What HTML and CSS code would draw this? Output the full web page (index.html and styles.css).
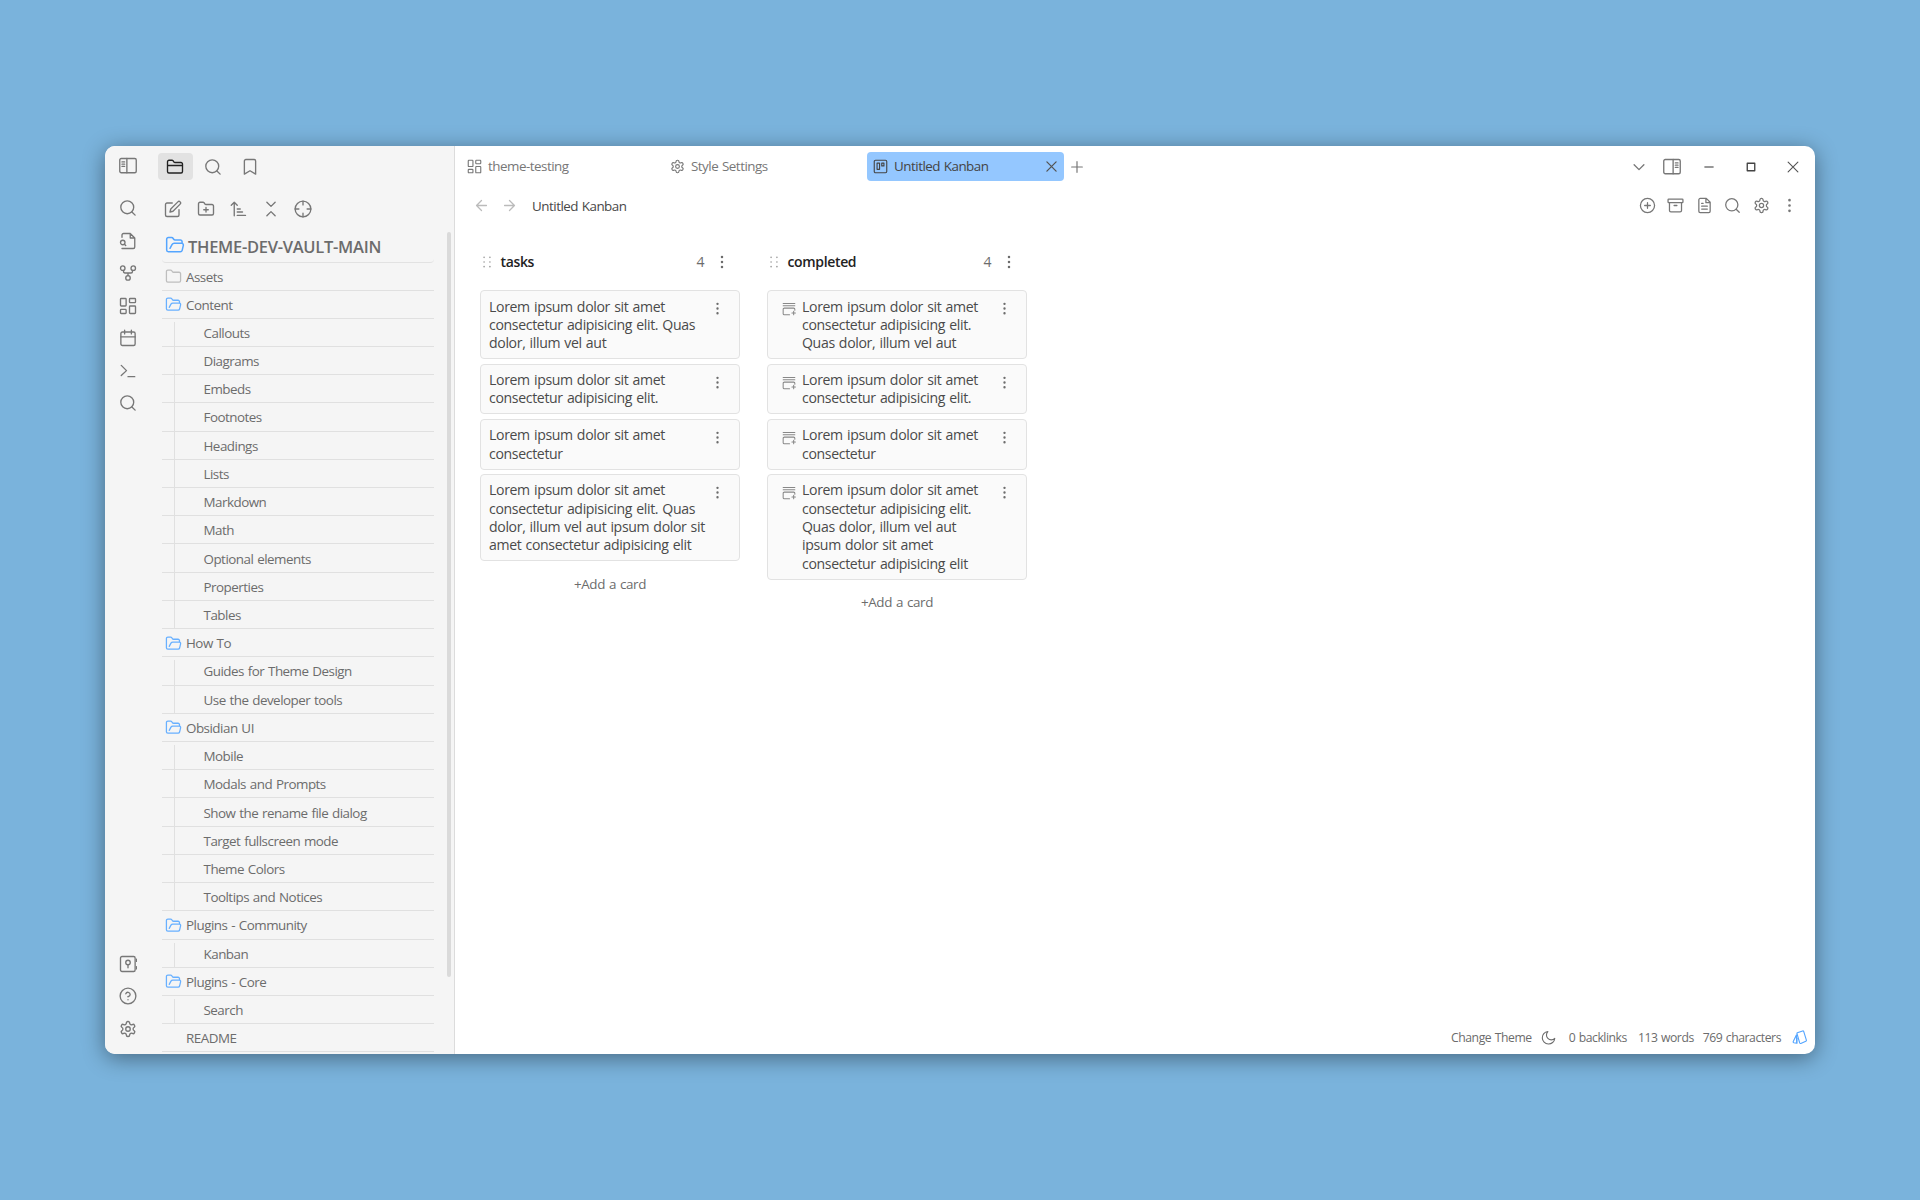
FILE: index.html
```html
<!DOCTYPE html>
<html lang="en">
<head>
<meta charset="utf-8">
<title>Untitled Kanban</title>
<link rel="stylesheet" href="styles.css">
</head>
<body>
<svg class="sprite" aria-hidden="true">
  <symbol id="search" viewBox="0 0 24 24"><circle cx="11" cy="11" r="8.6"/><path d="m21.5 21.5-4.3-4.3"/></symbol>
  <symbol id="panel-left" viewBox="0 0 24 24"><rect x="1" y="2" width="22" height="19" rx="2"/><path d="M10.5 2v19M4 6.500h3.5M4 9.500h3.5M4 12.500h3.5"/></symbol>
  <symbol id="panel-right" viewBox="0 0 24 24"><rect x="1" y="2" width="22" height="19" rx="2"/><path d="M13.5 2v19M16.5 6.500H20M16.5 9.500H20M16.5 12.500H20"/></symbol>
  <symbol id="folder-tab" viewBox="0 0 24 24"><path d="M4 20h16a2 2 0 0 0 2-2V8a2 2 0 0 0-2-2h-7.900a2 2 0 0 1-1.700-.9L9.600 3.900A2 2 0 0 0 7.900 3H4a2 2 0 0 0-2 2v13c0 1.100.9 2 2 2ZM2 10h20"/></symbol>
  <symbol id="bookmark" viewBox="0 0 24 24"><path d="m19.500 21.500-7.500-4.500-7.500 4.500V4a2 2 0 0 1 2-2h11a2 2 0 0 1 2 2z"/></symbol>
  <symbol id="edit" viewBox="0 0 24 24"><path d="M11 4H4a2 2 0 0 0-2 2v14a2 2 0 0 0 2 2h14a2 2 0 0 0 2-2v-7"/><path d="M18.500 2.500a2.120 2.120 0 0 1 3 3L12 15l-4 1 1-4z"/></symbol>
  <symbol id="folder-plus" viewBox="0 0 24 24"><path d="M4 20h16a2 2 0 0 0 2-2V8a2 2 0 0 0-2-2h-7.900a2 2 0 0 1-1.700-.9L9.600 3.900A2 2 0 0 0 7.900 3H4a2 2 0 0 0-2 2v13c0 1.100.9 2 2 2ZM12 10v6M9 13h6"/></symbol>
  <symbol id="sort" viewBox="0 0 24 24"><path d="m3 7 4-4 4 4M7 3v18M11 12h4M11 16h7M11 20.500h11"/></symbol>
  <symbol id="collapse" viewBox="0 0 24 24"><path d="m6.500 21 5.500-5.500 5.500 5.500M6.500 3l5.500 5.500L17.500 3"/></symbol>
  <symbol id="crosshair" viewBox="0 0 24 24"><circle cx="12" cy="12" r="10.500"/><path d="M22.500 12h-5M6.500 12h-5M12 6.500v-5M12 22.500v-5"/></symbol>
  <symbol id="file-search" viewBox="0 0 24 24"><path d="M4 7V4a2 2 0 0 1 2-2h9l6 6v12a2 2 0 0 1-2 2H4M15 2v6h6"/><circle cx="5" cy="14" r="3"/><path d="m9 18-1.800-1.800"/></symbol>
  <symbol id="fork" viewBox="0 0 24 24"><circle cx="12" cy="18.500" r="3"/><circle cx="5" cy="5.500" r="3"/><circle cx="19" cy="5.500" r="3"/><path d="M18 8.500v1.500q0 2-2 2H8q-2 0-2-2V8.500M12 12v3.500"/></symbol>
  <symbol id="dashboard" viewBox="0 0 24 24"><rect x="2" y="2" width="7.500" height="10" rx="1"/><rect x="14" y="2" width="8" height="5.500" rx="1"/><rect x="14" y="12" width="8" height="10" rx="1"/><rect x="2" y="16.500" width="7.500" height="5.500" rx="1"/></symbol>
  <symbol id="calendar" viewBox="0 0 24 24"><rect x="2.500" y="4" width="19" height="18" rx="2"/><path d="M16.500 1.500v5M7.500 1.500v5M2.500 10.500h19"/></symbol>
  <symbol id="terminal" viewBox="0 0 24 24"><path d="m3 18 7-6.500L3 4.500M12 19.500h9"/></symbol>
  <symbol id="vault" viewBox="0 0 24 24"><rect x="2" y="2" width="19.500" height="20" rx="2"/><circle cx="12" cy="10" r="3"/><path d="M12 13v4M23.500 5.500v3M23.500 15.500v3"/></symbol>
  <symbol id="help" viewBox="0 0 24 24"><circle cx="12" cy="12" r="10.500"/><path d="M9.100 9a3 3 0 0 1 5.800 1c0 2-3 3-3 3M12 17h.01"/></symbol>
  <symbol id="settings" viewBox="0 0 24 24"><path d="M12.220 2h-.44a2 2 0 0 0-2 2v.18a2 2 0 0 1-1 1.730l-.43.25a2 2 0 0 1-2 0l-.15-.08a2 2 0 0 0-2.730.73l-.22.38a2 2 0 0 0 .73 2.730l.15.1a2 2 0 0 1 1 1.720v.51a2 2 0 0 1-1 1.740l-.15.09a2 2 0 0 0-.73 2.730l.22.38a2 2 0 0 0 2.730.73l.15-.08a2 2 0 0 1 2 0l.43.25a2 2 0 0 1 1 1.730V20a2 2 0 0 0 2 2h.44a2 2 0 0 0 2-2v-.18a2 2 0 0 1 1-1.730l.43-.25a2 2 0 0 1 2 0l.15.08a2 2 0 0 0 2.730-.73l.22-.39a2 2 0 0 0-.73-2.730l-.15-.08a2 2 0 0 1-1-1.740v-.5a2 2 0 0 1 1-1.740l.15-.09a2 2 0 0 0 .73-2.730l-.22-.38a2 2 0 0 0-2.730-.73l-.15.08a2 2 0 0 1-2 0l-.43-.25a2 2 0 0 1-1-1.730V4a2 2 0 0 0-2-2z"/><circle cx="12" cy="12" r="3"/></symbol>
  <symbol id="folder" viewBox="0 0 24 24"><path d="M4 20h16a2 2 0 0 0 2-2V8a2 2 0 0 0-2-2h-7.900a2 2 0 0 1-1.700-.9L9.600 3.900A2 2 0 0 0 7.900 3H4a2 2 0 0 0-2 2v13c0 1.100.9 2 2 2Z"/></symbol>
  <symbol id="folder-open" viewBox="0 0 24 24"><path d="M20.500 9V8a2 2 0 0 0-2-2h-6.400a2 2 0 0 1-1.700-.9L9.600 3.900A2 2 0 0 0 7.900 3H4a2 2 0 0 0-2 2v13c0 1.100.9 2 2 2h14.500a2.200 2.200 0 0 0 2.100-1.600L22 12.500a2 2 0 0 0-1.700-2.500H11a3 3 0 0 0-2.600 1.500L6 16"/></symbol>
  <symbol id="kanban" viewBox="0 0 24 24"><rect x="2" y="2" width="20" height="20" rx="2"/><rect x="6.500" y="6.500" width="4" height="10"/><rect x="14" y="6.500" width="3.500" height="4.500"/></symbol>
  <symbol id="x" viewBox="0 0 24 24"><path d="M18.500 5.500l-13 13M5.500 5.500l13 13"/></symbol>
  <symbol id="plus" viewBox="0 0 24 24"><path d="M12 4v16M4 12h16"/></symbol>
  <symbol id="left" viewBox="0 0 24 24"><path d="m12 19-7-7 7-7M19 12H5"/></symbol>
  <symbol id="right" viewBox="0 0 24 24"><path d="m12 5 7 7-7 7M5 12h14"/></symbol>
  <symbol id="chevron" viewBox="0 0 24 24"><path d="m5.500 9 6.500 6.500L18.500 9"/></symbol>
  <symbol id="minus" viewBox="0 0 24 24"><path d="M6.500 12h11"/></symbol>
  <symbol id="square" viewBox="0 0 24 24"><path d="M7 7h10v10H7z"/></symbol>
  <symbol id="plus-circle" viewBox="0 0 24 24"><circle cx="12" cy="12" r="10"/><path d="M12 8v8M8 12h8"/></symbol>
  <symbol id="archive" viewBox="0 0 24 24"><rect x="1.500" y="3" width="21" height="5" rx="1"/><path d="M3.500 8v11a2 2 0 0 0 2 2h13a2 2 0 0 0 2-2V8M10 12h4"/></symbol>
  <symbol id="file" viewBox="0 0 24 24"><path d="M14.500 2H6a2 2 0 0 0-2 2v16a2 2 0 0 0 2 2h12a2 2 0 0 0 2-2V7.500zM14 2v6h6M16 13H8M16 17H8M10 9H8"/></symbol>
  <symbol id="more" viewBox="0 0 24 24"><circle cx="12" cy="12" r="1"/><circle cx="12" cy="4.500" r="1"/><circle cx="12" cy="19.500" r="1"/></symbol>
  <symbol id="grip" viewBox="0 0 24 24"><path d="M7 4h.01M7 12h.01M7 20h.01M17 4h.01M17 12h.01M17 20h.01"/></symbol>
  <symbol id="note-plus" viewBox="0 0 24 24"><path d="M2 2.500h20M2 6.500h20M22 14v-1.500a2 2 0 0 0-2-2H4a2 2 0 0 0-2 2V20a2 2 0 0 0 2 2h9M20 16v6M17 19h6"/></symbol>
  <symbol id="moon" viewBox="0 0 24 24"><path d="M11 2.500a7.500 7.500 0 0 0 11 11A10 10 0 1 1 11 2.500z"/></symbol>
  <symbol id="cards" viewBox="0 0 24 24"><path d="m8.500 4.500 8.500-3q1.200-.3 1.700.8l4.300 14q.3 1.300-.9 1.700l-8 3.500q-1.300.4-1.800-.9L8 6q-.3-1 .5-1.500zM7 8 2 18.500q-.5 1.500 1 2l4.500.5zM8 13v8"/></symbol>
</svg>

<div class="window">
  <aside class="sidebar">
    <nav class="ribbon">
      <svg class="icon toggle"><use href="#panel-left"/></svg>
      <div class="ribbon-actions">
        <svg class="icon"><use href="#search"/></svg>
        <svg class="icon"><use href="#file-search"/></svg>
        <svg class="icon"><use href="#fork"/></svg>
        <svg class="icon"><use href="#dashboard"/></svg>
        <svg class="icon"><use href="#calendar"/></svg>
        <svg class="icon"><use href="#terminal"/></svg>
        <svg class="icon"><use href="#search"/></svg>
      </div>
      <div class="ribbon-actions ribbon-bottom">
        <svg class="icon"><use href="#vault"/></svg>
        <svg class="icon"><use href="#help"/></svg>
        <svg class="icon"><use href="#settings"/></svg>
      </div>
    </nav>
    <div class="explorer">
      <div class="side-tabs">
        <span class="side-tab active"><svg class="icon"><use href="#folder-tab"/></svg></span>
        <span class="side-tab"><svg class="icon"><use href="#search"/></svg></span>
        <span class="side-tab"><svg class="icon"><use href="#bookmark"/></svg></span>
      </div>
      <div class="side-tools">
        <svg class="icon"><use href="#edit"/></svg>
        <svg class="icon"><use href="#folder-plus"/></svg>
        <svg class="icon"><use href="#sort"/></svg>
        <svg class="icon"><use href="#collapse"/></svg>
        <svg class="icon"><use href="#crosshair"/></svg>
      </div>
      <div class="tree-scroll">
        <div class="tree">
          <div class="vault"><svg class="icon"><use href="#folder-open"/></svg><span>THEME-DEV-VAULT-MAIN</span></div>
          <div class="row folder closed"><svg class="icon"><use href="#folder"/></svg><span>Assets</span></div>
          <div class="row folder"><svg class="icon"><use href="#folder-open"/></svg><span>Content</span></div>
          <div class="children">
            <div class="row"><span>Callouts</span></div>
            <div class="row"><span>Diagrams</span></div>
            <div class="row"><span>Embeds</span></div>
            <div class="row"><span>Footnotes</span></div>
            <div class="row"><span>Headings</span></div>
            <div class="row"><span>Lists</span></div>
            <div class="row"><span>Markdown</span></div>
            <div class="row"><span>Math</span></div>
            <div class="row"><span>Optional elements</span></div>
            <div class="row"><span>Properties</span></div>
            <div class="row"><span>Tables</span></div>
          </div>
          <div class="row folder"><svg class="icon"><use href="#folder-open"/></svg><span>How To</span></div>
          <div class="children">
            <div class="row"><span>Guides for Theme Design</span></div>
            <div class="row"><span>Use the developer tools</span></div>
          </div>
          <div class="row folder"><svg class="icon"><use href="#folder-open"/></svg><span>Obsidian UI</span></div>
          <div class="children">
            <div class="row"><span>Mobile</span></div>
            <div class="row"><span>Modals and Prompts</span></div>
            <div class="row"><span>Show the rename file dialog</span></div>
            <div class="row"><span>Target fullscreen mode</span></div>
            <div class="row"><span>Theme Colors</span></div>
            <div class="row"><span>Tooltips and Notices</span></div>
          </div>
          <div class="row folder"><svg class="icon"><use href="#folder-open"/></svg><span>Plugins - Community</span></div>
          <div class="children">
            <div class="row"><span>Kanban</span></div>
          </div>
          <div class="row folder"><svg class="icon"><use href="#folder-open"/></svg><span>Plugins - Core</span></div>
          <div class="children">
            <div class="row"><span>Search</span></div>
          </div>
          <div class="row root-file"><span>README</span></div>
        </div>
        <div class="scroll-track"><div class="scroll-thumb"></div></div>
      </div>
    </div>
  </aside>

  <main class="main">
    <div class="tabs">
      <div class="tab"><svg class="icon"><use href="#dashboard"/></svg><span>theme-testing</span></div>
      <div class="tab"><svg class="icon"><use href="#settings"/></svg><span>Style Settings</span></div>
      <div class="tab active"><svg class="icon"><use href="#kanban"/></svg><span>Untitled Kanban</span><svg class="icon close"><use href="#x"/></svg></div>
      <svg class="icon new-tab"><use href="#plus"/></svg>
      <div class="window-controls">
        <svg class="icon chevron"><use href="#chevron"/></svg>
        <svg class="icon panel"><use href="#panel-right"/></svg>
        <svg class="icon minimize"><use href="#minus"/></svg>
        <svg class="icon maximize"><use href="#square"/></svg>
        <svg class="icon quit"><use href="#x"/></svg>
      </div>
    </div>
    <header class="view-header">
      <div class="history">
        <svg class="icon"><use href="#left"/></svg>
        <svg class="icon"><use href="#right"/></svg>
      </div>
      <span class="view-title">Untitled Kanban</span>
      <div class="view-actions">
        <svg class="icon"><use href="#plus-circle"/></svg>
        <svg class="icon"><use href="#archive"/></svg>
        <svg class="icon"><use href="#file"/></svg>
        <svg class="icon"><use href="#search"/></svg>
        <svg class="icon"><use href="#settings"/></svg>
        <svg class="icon more"><use href="#more"/></svg>
      </div>
    </header>
    <div class="board">
      <section class="lane">
        <div class="lane-header"><svg class="icon grip"><use href="#grip"/></svg><h2>tasks</h2><span class="count">4</span><svg class="icon more"><use href="#more"/></svg></div>
        <div class="cards">
          <article class="card"><p>Lorem ipsum dolor sit amet<br>consectetur adipisicing elit. Quas<br>dolor, illum vel aut</p><svg class="icon more"><use href="#more"/></svg></article>
          <article class="card"><p>Lorem ipsum dolor sit amet<br>consectetur adipisicing elit.</p><svg class="icon more"><use href="#more"/></svg></article>
          <article class="card"><p>Lorem ipsum dolor sit amet<br>consectetur</p><svg class="icon more"><use href="#more"/></svg></article>
          <article class="card"><p>Lorem ipsum dolor sit amet<br>consectetur adipisicing elit. Quas<br>dolor, illum vel aut ipsum dolor sit<br>amet consectetur adipisicing elit</p><svg class="icon more"><use href="#more"/></svg></article>
        </div>
        <div class="add-card">+Add a card</div>
      </section>
      <section class="lane">
        <div class="lane-header"><svg class="icon grip"><use href="#grip"/></svg><h2>completed</h2><span class="count">4</span><svg class="icon more"><use href="#more"/></svg></div>
        <div class="cards">
          <article class="card"><svg class="icon note"><use href="#note-plus"/></svg><p>Lorem ipsum dolor sit amet<br>consectetur adipisicing elit.<br>Quas dolor, illum vel aut</p><svg class="icon more"><use href="#more"/></svg></article>
          <article class="card"><svg class="icon note"><use href="#note-plus"/></svg><p>Lorem ipsum dolor sit amet<br>consectetur adipisicing elit.</p><svg class="icon more"><use href="#more"/></svg></article>
          <article class="card"><svg class="icon note"><use href="#note-plus"/></svg><p>Lorem ipsum dolor sit amet<br>consectetur</p><svg class="icon more"><use href="#more"/></svg></article>
          <article class="card"><svg class="icon note"><use href="#note-plus"/></svg><p>Lorem ipsum dolor sit amet<br>consectetur adipisicing elit.<br>Quas dolor, illum vel aut<br>ipsum dolor sit amet<br>consectetur adipisicing elit</p><svg class="icon more"><use href="#more"/></svg></article>
        </div>
        <div class="add-card">+Add a card</div>
      </section>
    </div>
    <footer class="status">
      <span class="theme">Change Theme</span>
      <svg class="icon moon"><use href="#moon"/></svg>
      <span class="backlinks">0 backlinks</span>
      <span class="words">113 words</span>
      <span class="chars">769 characters</span>
      <svg class="icon deck"><use href="#cards"/></svg>
    </footer>
  </main>
</div>
</body>
</html>
```
FILE: styles.css
```css
* { box-sizing: border-box; }
body {
  margin: 0;
  height: 1200px;
  padding: 146px 105px;
  overflow: hidden;
  background: #7ab3dc;
  font-family: "Open Sans", "Noto Sans", sans-serif;
  font-size: 13.4px;
  letter-spacing: -0.5px;
  word-spacing: 0.8px;
  color: #6c6c6c;
  white-space: nowrap;
}
.sprite { position: absolute; width: 0; height: 0; }
.icon {
  width: 18px;
  height: 18px;
  flex: none;
  overflow: visible;
  fill: none;
  stroke: currentColor;
  stroke-width: 1.8;
  stroke-linecap: round;
  stroke-linejoin: round;
}
.window {
  display: flex;
  width: 1710px;
  height: 908px;
  border-radius: 10px;
  overflow: hidden;
  background: #fff;
  box-shadow: 0 4px 22px rgba(0, 0, 0, .42);
}

/* Sidebar */
.sidebar {
  display: flex;
  width: 350px;
  flex: none;
  background: #f5f5f5;
  border-right: 1px solid #dcdcdc;
}
.ribbon {
  display: flex;
  flex-direction: column;
  align-items: center;
  width: 45px;
  padding: 11px 0 16.500px;
  color: #777;
}
.ribbon-actions { display: flex; flex-direction: column; gap: 14.500px; margin-top: 24px; }
.ribbon-bottom { margin-top: auto; }
.explorer { display: flex; flex-direction: column; flex: 1; padding-left: 8px; }
.side-tabs { display: flex; gap: 3px; height: 41px; padding-top: 7px; color: #777; }
.side-tab { display: flex; align-items: center; justify-content: center; width: 34.500px; height: 27px; border-radius: 4px; }
.side-tab.active { background: #e2e2e2; color: #222; }
.side-tools { display: flex; gap: 14.500px; height: 45px; padding: 12.500px 6px 0; color: #777; }
.tree-scroll { display: flex; flex: 1; overflow: hidden; }
.tree { width: 272px; margin-left: 4px; }
.vault {
  display: flex;
  height: 31px;
  padding: 0 0 2px 3px;
  align-items: center;
  gap: 3px;
  border-bottom: 1px solid #e2e2e2;
  border-radius: 4px;
  font-size: 16.500px;
  font-weight: 600;
  letter-spacing: -0.280px;
}
.vault .icon { width: 20px; height: 20px; margin-top: -3px; color: #54a5ff; }
.row {
  display: flex;
  align-items: center;
  height: 28.220px;
  padding-top: 1px;
  padding-left: 41.500px;
  border-bottom: 1px solid #e0e0e0;
}
.vault + .row { height: 27.500px; }
.row.folder { padding-left: 3px; gap: 4px; }
.row.folder .icon { width: 17px; height: 17px; color: #68b0ff; }
.row.closed .icon { color: #bebebe; }
.row.root-file { padding-left: 24px; }
.children { background: linear-gradient(#e0e0e0, #e0e0e0) 12px 3px / 1px 100% no-repeat; }
.scroll-track { width: 4px; margin-left: 13px; }
.scroll-thumb { height: 745px; border-radius: 2px; background: #dadada; }

/* Tabs */
.main { display: flex; flex-direction: column; flex: 1; }
.tabs { display: flex; align-items: center; height: 41px; padding-left: 6px; }
.tab {
  display: flex;
  align-items: center;
  width: 197px;
  height: 29px;
  margin-right: 6px;
  padding-left: 6px;
  padding-bottom: 1px;
  gap: 6px;
  border-radius: 4px;
  color: #777;
}
.tab .icon { width: 15px; height: 15px; }
.tab.active { background: #94c7ff; color: #444; margin-right: 5px; }
.tab .close { width: 17px; height: 17px; margin-left: auto; margin-right: 4px; color: #555; }
.new-tab { width: 16px; height: 16px; margin-top: 1px; color: #777; }
.window-controls { display: flex; align-items: center; height: 40px; margin-left: auto; padding-right: 13px; color: #777; }
.window-controls .chevron { margin-right: 15px; }
.window-controls .panel { margin-right: 19px; }
.window-controls .minimize, .window-controls .maximize { margin-right: 24px; }
.window-controls .maximize { color: #444; }
.window-controls .quit { color: #555; stroke-width: 1.500; }

.view-header { display: flex; align-items: center; height: 37.500px; padding: 0 17px 0 18px; }
.history { display: flex; gap: 11px; color: #bbb; }
.history .icon { width: 17px; height: 17px; }
.view-title { margin-left: 14px; color: #484848; }
.view-actions { display: flex; gap: 11.500px; margin-left: auto; color: #777; }
.view-actions .icon { width: 17px; height: 17px; }

/* Board */
.board { display: flex; flex: 1; gap: 27px; padding: 19px 25px; }
.lane { width: 260px; }
.lane-header { display: flex; align-items: center; height: 36px; }
.lane-header .grip { width: 14px; height: 14px; stroke-width: 2.800; color: #999; }
.lane-header h2 { margin: 0 0 0 6.500px; font-size: 14px; font-weight: 600; letter-spacing: -0.350px; color: #222; }
.lane-header .count { margin-left: auto; margin-right: 10px; font-size: 14px; }
.lane-header .more { width: 16px; height: 16px; margin-right: 10px; }
.cards { display: flex; flex-direction: column; gap: 4.200px; padding-top: 10.500px; }
.card {
  display: flex;
  align-items: flex-start;
  padding: 6.600px 14px 5.700px 8px;
  border: 1px solid #e2e2e2;
  border-radius: 4px;
  background: #fafafa;
}
.card p { flex: 1; margin: 0; font-size: 14.100px; line-height: 18.350px; letter-spacing: -0.350px; color: #4a4a4a; }
.card .more { width: 15px; height: 15px; margin-top: 3.500px; }
.card .note { width: 14px; height: 14px; margin: 4.500px 6px 0 6px; color: #888; }
.add-card { margin-top: 13.500px; text-align: center; letter-spacing: -0.350px; }

/* Status bar */
.status { display: flex; align-items: center; height: 33px; padding-right: 8px; justify-content: flex-end; font-size: 12.200px; letter-spacing: -0.450px; }
.status .moon { width: 15px; height: 15px; margin: 0 13px 0 9px; }
.status .words { margin-left: 11px; }
.status .chars { margin-left: 9px; }
.status .deck { width: 15px; height: 15px; margin-left: 11px; color: #54a5ff; }
```
